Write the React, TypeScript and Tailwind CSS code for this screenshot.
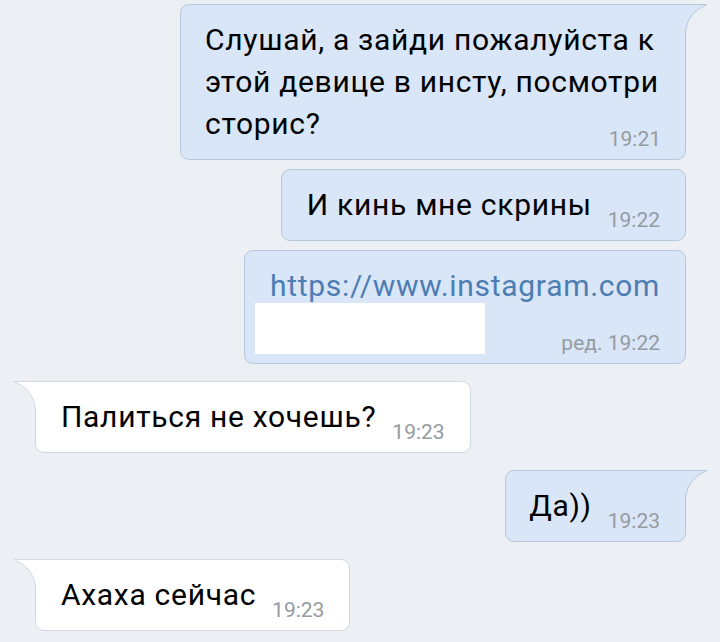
import React from "react";

const OUT_BG = "#d9e6f7";
const OUT_BORDER = "#b7c7da";
const IN_BG = "#ffffff";
const IN_BORDER = "#d2d8df";

function TailOut() {
  return (
    <svg className="absolute left-full top-[-1px]" width="24" height="28" viewBox="0 0 24 28">
      <path d="M0 0 H22.5 Q3 8 1 27 L0 27 Z" fill={OUT_BG} />
      <path d="M0 0.5 H22 Q3 8 0.5 27" fill="none" stroke={OUT_BORDER} strokeWidth="1" />
    </svg>
  );
}

function TailIn() {
  return (
    <svg className="absolute right-full top-[-1px]" width="24" height="28" viewBox="0 0 24 28">
      <path d="M24 0 H1.5 Q21 8 23 27 L24 27 Z" fill={IN_BG} />
      <path d="M24 0.5 H2 Q21 8 23.5 27" fill="none" stroke={IN_BORDER} strokeWidth="1" />
    </svg>
  );
}

function Time({ children }: { children: React.ReactNode }) {
  return (
    <span className="float-right ml-[16px] mt-[24px] mb-[-6px] text-[21px] leading-[24px] tracking-normal text-[#959ba2]">
      {children}
    </span>
  );
}

const textCls = "flow-root text-[30px] leading-[42px] tracking-[0.7px]";

function Out({ children, tail, className = "" }: { children: React.ReactNode; tail?: boolean; className?: string }) {
  return (
    <div className={`relative self-end rounded-[9px] ${tail ? "rounded-tr-none" : ""} border border-[#b7c7da] bg-[#d9e6f7] px-[25px] py-[14px] ${className}`}>
      {tail && <TailOut />}
      {children}
    </div>
  );
}

function In({ children }: { children: React.ReactNode }) {
  return (
    <div className="relative self-start rounded-[9px] rounded-tl-none border border-[#d2d8df] bg-white px-[25px] py-[14px]">
      <TailIn />
      {children}
    </div>
  );
}

export default function App() {
  return (
    <div
      className="flex min-h-[642px] w-[720px] flex-col bg-[#ecf0f4] pl-[35px] pr-[34px] pt-[4px] text-black"
      style={{ fontFamily: "Roboto, 'Noto Sans', sans-serif" }}
    >
      <Out tail className="w-[506px] !px-[24px]">
        <p className={textCls}>
          Слушай, а зайди пожалуйста к этой девице в инсту, посмотри сторис?
          <Time>19:21</Time>
        </p>
      </Out>
      <div className="h-[9px]" />
      <Out>
        <p className={textCls}>
          И кинь мне скрины
          <Time>19:22</Time>
        </p>
      </Out>
      <div className="h-[9px]" />
      <Out>
        <div className="text-[30px] leading-[42px] tracking-[0.7px]">
          <div className="text-[#4d7db2]">https://www.instagram.com</div>
          <div className="flow-root">
            <div className="float-left ml-[-15px] mt-[-4px] mb-[-5px] h-[51px] w-[230px] bg-white" />
            <span className="float-right mt-[24px] mb-[-6px] text-[21px] leading-[24px] tracking-normal text-[#959ba2]">ред. 19:22</span>
          </div>
        </div>
      </Out>
      <div className="h-[17px]" />
      <In>
        <p className={textCls}>
          Палиться не хочешь?
          <Time>19:23</Time>
        </p>
      </In>
      <div className="h-[17px]" />
      <Out tail className="!pl-[23px]">
        <p className={textCls}>
          Да))
          <Time>19:23</Time>
        </p>
      </Out>
      <div className="h-[17px]" />
      <In>
        <p className={textCls}>
          Ахаха сейчас
          <Time>19:23</Time>
        </p>
      </In>
    </div>
  );
}
